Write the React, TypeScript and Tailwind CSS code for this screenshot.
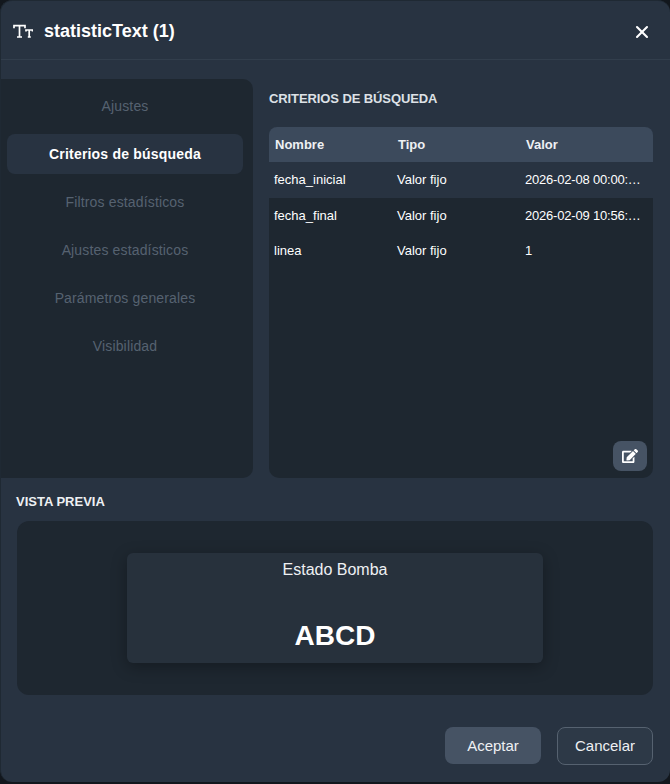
import React from 'react';
import { X } from 'lucide-react';
import { FaEdit } from 'react-icons/fa';

const menuItems = ['Ajustes', 'Criterios de búsqueda', 'Filtros estadísticos', 'Ajustes estadísticos', 'Parámetros generales', 'Visibilidad'];

const rows = [
  { name: 'fecha_inicial', type: 'Valor fijo', value: '2026-02-08 00:00:00', height: 'h-[36px]' },
  { name: 'fecha_final', type: 'Valor fijo', value: '2026-02-09 10:56:00', height: 'h-[35px]' },
  { name: 'linea', type: 'Valor fijo', value: '1', height: 'h-[35px]' },
];

function TextIcon() {
  return (
    <svg width="20" height="14" viewBox="0 0 20 14" fill="none" stroke="currentColor" strokeWidth="1.7">
      <path d="M1 4.2V1.7H12V4.2M6.5 1.7V13M4 13H9" />
      <path d="M13 7.6V6H19.5V7.6M16.2 6V13M14.8 13H17.8" />
    </svg>
  );
}

export default function App() {
  return (
    <div className="h-[784px] w-[670px] bg-[#12171d] font-['Liberation_Sans',Arial,sans-serif] text-white">
      <div className="flex h-[782px] flex-col rounded-[12px] border-l border-t border-[#1f2933] bg-[#283341]">
        {/* Header */}
        <header className="flex h-[59px] shrink-0 items-center justify-between border-b border-[#323e4c] pl-[12px] pr-[18px] pt-[2px]">
          <div className="flex items-center gap-[11px]">
            <TextIcon />
            <h1 className="text-[18px] font-bold">statisticText (1)</h1>
          </div>
          <X size={20} strokeWidth={2.5} className="mt-[2px]" />
        </header>

        <div className="flex h-[418px] shrink-0 gap-[16px] pr-[17px] pt-[19px]">
          {/* Side menu */}
          <nav className="flex w-[252px] flex-col gap-[8px] rounded-r-[10px] bg-[#1e2730] pb-[6px] pl-[6px] pr-[10px] pt-[7px]">
            {menuItems.map((item) => (
              <div
                key={item}
                className={
                  item === 'Criterios de búsqueda'
                    ? 'flex h-[40px] items-center justify-center rounded-[8px] bg-[#283341] text-[14px] font-bold tracking-[0.2px] text-white'
                    : 'flex h-[40px] items-center justify-center text-[14px] tracking-[0.15px] text-[#566270]'
                }
              >
                {item}
              </div>
            ))}
          </nav>

          {/* Criteria */}
          <section className="flex min-w-0 flex-1 flex-col">
            <h2 className="mb-[21px] mt-[13px] text-[13px] font-bold leading-[14px] tracking-[-0.1px] text-[#dde1e6]">CRITERIOS DE BÚSQUEDA</h2>
            <div className="relative flex-1 rounded-[10px] bg-[#1e2730]">
              <div className="grid h-[35px] grid-cols-[123px_128px_1fr] items-center rounded-t-[8px] bg-[#3c4a5c] pl-[6px] text-[13px] font-bold text-[#eef0f3]">
                <span>Nombre</span>
                <span>Tipo</span>
                <span>Valor</span>
              </div>
              {rows.map((row, i) => (
                <div
                  key={row.name}
                  className={`grid ${row.height} grid-cols-[123px_128px_1fr] items-center pl-[5px] text-[13px] text-white ${i === 0 ? 'bg-[#283341]' : ''}`}
                >
                  <span>{row.name}</span>
                  <span>{row.type}</span>
                  <span className="mr-[11.5px] truncate tracking-[-0.2px]">{row.value}</span>
                </div>
              ))}
              <button className="absolute bottom-[7px] right-[6px] flex h-[30px] w-[34px] items-center justify-center rounded-[8px] bg-[#465364] text-white">
                <FaEdit size={16} />
              </button>
            </div>
          </section>
        </div>

        {/* Preview */}
        <section className="pl-[15px] pr-[17px] pt-[17px]">
          <h2 className="mb-[12px] text-[13px] font-bold leading-[14px] text-[#eef0f3]">VISTA PREVIA</h2>
          <div className="ml-px flex h-[174px] items-center justify-center rounded-[12px] bg-[#1e2730]">
            <div className="flex h-[110px] w-[416px] flex-col items-center rounded-[6px] bg-[#27313c] shadow-[0_4px_16px_rgba(0,0,0,0.3)]">
              <span className="mt-[7px] text-[16px] leading-[20px] text-[#eef0f3]">Estado Bomba</span>
              <span className="mt-[40px] text-[28px] font-bold leading-[32px]">ABCD</span>
            </div>
          </div>
        </section>

        {/* Footer */}
        <footer className="flex justify-end gap-[16px] pr-[17px] pt-[32px]">
          <button className="h-[37px] w-[96px] rounded-[8px] bg-[#465364] pt-[1px] text-[15px] text-[#eef0f3]">Aceptar</button>
          <button className="h-[38px] w-[96px] rounded-[8px] border border-[#566270] bg-[#2d3947] pt-[1px] text-[15px] text-[#eef0f3]">Cancelar</button>
        </footer>
      </div>
    </div>
  );
}
